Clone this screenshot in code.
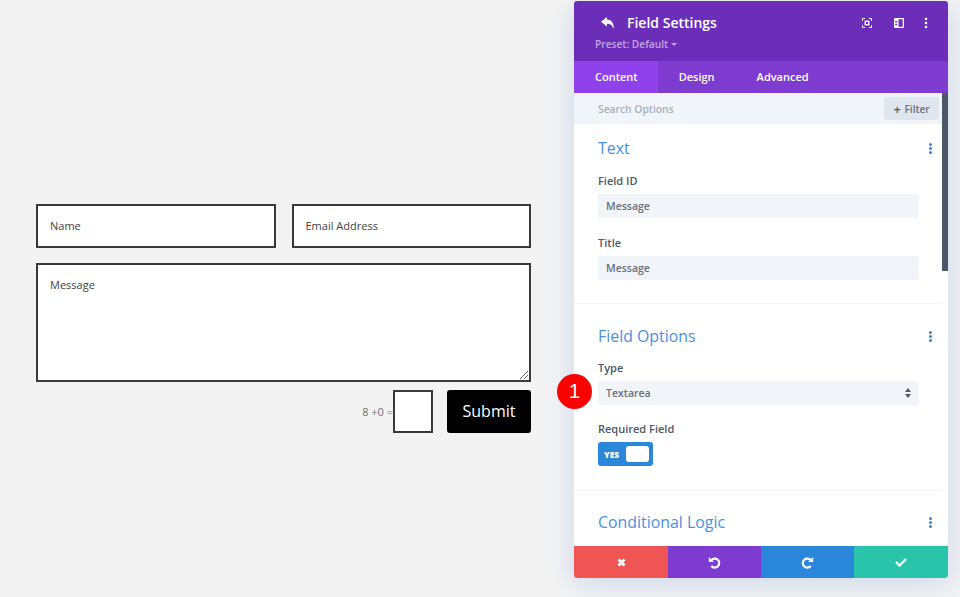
<div class="page">
	<form class="contact">
		<div class="row">
			<div class="input">Name</div>
			<div class="input">Email Address</div>
		</div>
		<div class="input area">
			Message
			<svg class="grip" width="10" height="10" viewBox="0 0 10 10">
				<path d="M1 9L9 1M5 9L9 5" stroke="#666" stroke-width="1" fill="none" />
			</svg>
		</div>
		<div class="actions">
			<span class="captcha">8 +0 =</span>
			<div class="answer"></div>
			<div class="submit">Submit</div>
		</div>
	</form>

	<div class="badge">1</div>

	<aside class="panel">
		<div class="scrollbar"></div>

		<header class="head">
			<div class="title-row">
				<svg class="back" width="14" height="12" viewBox="0 0 14 12">
					<path d="M6 0L0 4.800 6 9.600V6.800c3 0 5 1.200 6.600 5 .8-5-1.800-9-6.600-9.300z" fill="#fff" />
				</svg>
				<h1>Field Settings</h1>
				<svg class="hicon focus" width="10" height="10" viewBox="0 0 10 10">
					<path d="M.5 3V.5H3M7 .5h2.500V3M9.500 7v2.500H7M3 9.500H.5V7" stroke="#fff" stroke-width="1" fill="none" />
					<rect x="3.200" y="3.200" width="3.600" height="3.600" stroke="#fff" stroke-width="1.300" fill="none" />
				</svg>
				<svg class="hicon columns" width="10" height="10" viewBox="0 0 10 10">
					<path d="M1 0h8a1 1 0 0 1 1 1v8a1 1 0 0 1-1 1H1a1 1 0 0 1-1-1V1a1 1 0 0 1 1-1zm.2 3v1.500h2V3zm0 2.700v1.500h2V5.700zM4.500 1.300v7.400h4.200V1.300z" fill="#fff" fill-rule="evenodd" />
				</svg>
				<svg class="hicon more" width="4" height="12" viewBox="0 0 4 12">
					<circle cx="2" cy="2" r="1.300" fill="#fff" /><circle cx="2" cy="6" r="1.300" fill="#fff" /><circle cx="2" cy="10" r="1.300" fill="#fff" />
				</svg>
			</div>
			<div class="preset">Preset: Default <i class="caret"></i></div>
		</header>

		<nav class="tabs">
			<span class="tab active">Content</span>
			<span class="tab">Design</span>
			<span class="tab">Advanced</span>
		</nav>

		<div class="search">
			<span class="placeholder">Search Options</span>
			<span class="filter"><b>+</b> Filter</span>
		</div>

		<div class="body">
			<section class="group">
				<div class="group-head">
					<h2>Text</h2>
					<span class="dots"><i></i><i></i><i></i></span>
				</div>
				<div class="label">Field ID</div>
				<div class="field">Message</div>
				<div class="label">Title</div>
				<div class="field">Message</div>
			</section>

			<section class="group">
				<div class="group-head">
					<h2>Field Options</h2>
					<span class="dots"><i></i><i></i><i></i></span>
				</div>
				<div class="label">Type</div>
				<div class="field select">
					Textarea
					<svg width="6" height="10" viewBox="0 0 6 10">
						<path d="M3 0l3 4H0zM3 10L0 6h6z" fill="#4c5866" />
					</svg>
				</div>
				<div class="label required">Required Field</div>
				<div class="toggle"><span>YES</span><i></i></div>
			</section>

			<section class="group last">
				<div class="group-head">
					<h2>Conditional Logic</h2>
					<span class="dots"><i></i><i></i><i></i></span>
				</div>
			</section>
		</div>

		<footer class="foot">
			<div class="btn red">
				<svg width="11" height="11" viewBox="0 0 11 11">
					<path d="M1.500 3.500l2-2 2 2 2-2 2 2-2 2 2 2-2 2-2-2-2 2-2-2 2-2z" fill="#fff" />
				</svg>
			</div>
			<div class="btn purple">
				<svg width="13" height="13" viewBox="0 0 13 13">
					<path d="M3 4.500a4.500 4.500 0 1 1 .3 5.500" stroke="#fff" stroke-width="2.200" fill="none" />
					<path d="M.8 1v5h5z" fill="#fff" />
				</svg>
			</div>
			<div class="btn blue">
				<svg width="13" height="13" viewBox="0 0 13 13">
					<path d="M10 4.500a4.500 4.500 0 1 0-.3 5.500" stroke="#fff" stroke-width="2.200" fill="none" />
					<path d="M12.200 1v5h-5z" fill="#fff" />
				</svg>
			</div>
			<div class="btn green">
				<svg width="12" height="10" viewBox="0 0 12 10">
					<path d="M1 5l3.500 3.500L11 2" stroke="#fff" stroke-width="2.400" fill="none" />
				</svg>
			</div>
		</footer>
	</aside>
</div>

<style>
	:global(body) {
		margin: 0;
		background: #f3f3f3;
	}
	.page {
		position: relative;
		width: 960px;
		height: 597px;
		overflow: hidden;
		font-family: "Open Sans", sans-serif;
		padding: 204px 0 0 36px;
		box-sizing: border-box;
	}
	.contact {
		width: 495px;
		display: flex;
		flex-direction: column;
		gap: 15px;
	}
	.row {
		display: flex;
		gap: 16px;
	}
	.input {
		position: relative;
		flex: 1;
		height: 44px;
		box-sizing: border-box;
		background: #fff;
		border: 2px solid #3a3a3a;
		padding: 0 12px;
		font-size: 11px;
		line-height: 40px;
		color: #3f3f3f;
	}
	.area {
		flex: none;
		height: 119px;
		line-height: 39px;
	}
	.grip {
		position: absolute;
		right: 0;
		bottom: 0;
	}
	.actions {
		display: flex;
		align-items: flex-start;
		justify-content: flex-end;
		margin-top: -7px;
	}
	.captcha {
		font-size: 11px;
		line-height: 43px;
		color: #6e6e6e;
	}
	.answer {
		width: 40px;
		height: 43px;
		box-sizing: border-box;
		background: #fff;
		border: 2px solid #3a3a3a;
	}
	.submit {
		margin-left: 14px;
		width: 84px;
		height: 43px;
		background: #000;
		border-radius: 3px;
		color: #fff;
		font-size: 16px;
		line-height: 42px;
		text-align: center;
	}
	.badge {
		position: absolute;
		left: 557px;
		top: 374px;
		width: 35px;
		height: 35px;
		border-radius: 50%;
		background: #fe0000;
		color: #fff;
		font-family: "Liberation Sans", sans-serif;
		font-size: 20px;
		line-height: 35px;
		text-align: center;
		z-index: 2;
	}
	.panel {
		position: absolute;
		left: 574px;
		top: 1px;
		width: 374px;
		height: 577px;
		display: flex;
		flex-direction: column;
		background: #fff;
		border-radius: 3px;
		box-shadow: 0 5px 30px rgba(43, 105, 200, 0.2);
	}
	.scrollbar {
		position: absolute;
		top: 92px;
		right: 0;
		width: 6px;
		height: 178px;
		background: #4c5866;
		z-index: 1;
	}
	.head {
		height: 60px;
		box-sizing: border-box;
		background: #6c2eb9;
		border-radius: 3px 3px 0 0;
		padding: 12px 20px 0 27px;
		flex: none;
	}
	.title-row {
		display: flex;
		align-items: center;
		height: 19px;
	}
	h1 {
		margin: 0 0 0 12px;
		font-size: 14px;
		font-weight: 600;
		color: #fff;
		flex: 1;
		line-height: 19px;
	}
	.hicon {
		display: block;
	}
	.focus {
		margin-right: 22px;
	}
	.columns {
		margin-right: 20px;
	}
	.preset {
		margin: 5px 0 0 -6px;
		font-size: 10.200px;
		font-weight: 600;
		line-height: 14px;
		color: #c3a5e4;
	}
	.caret {
		display: inline-block;
		border: 3px solid transparent;
		border-top-color: #c3a5e4;
		border-bottom: 0;
		vertical-align: 2px;
	}
	.tabs {
		height: 32px;
		flex: none;
		display: flex;
		background: #7d3bcf;
	}
	.tab {
		font-size: 11px;
		font-weight: 600;
		color: #fff;
		line-height: 32px;
		padding: 0 21px;
	}
	.tab.active {
		background: #8f42ec;
		padding: 0 20px 0 21px;
	}
	.search {
		height: 31px;
		flex: none;
		box-sizing: border-box;
		background: #f1f5f9;
		display: flex;
		align-items: center;
		justify-content: space-between;
		padding: 0 9px 0 24px;
		font-size: 10px;
	}
	.placeholder {
		color: #a3b0c2;
		font-weight: 600;
		font-size: 10.300px;
	}
	.filter {
		width: 55px;
		height: 23px;
		background: #e0e5ee;
		border-radius: 3px;
		color: #66707e;
		font-weight: 600;
		line-height: 25px;
		text-align: center;
		box-sizing: border-box;
	}
	.filter b {
		font-size: 13px;
		color: #4c5866;
		font-weight: 600;
		margin-right: 1px;
		vertical-align: -1px;
	}
	.body {
		flex: 1;
		overflow: hidden;
	}
	.group {
		padding: 21px 23px 23px 24px;
		margin-right: 6px;
		border-bottom: 1px solid #f3f5f8;
	}
	.group:first-child {
		padding-top: 13px;
	}
	.group:nth-child(2) {
		padding-bottom: 24px;
	}
	.group.last {
		border: 0;
		padding-top: 20px;
	}
	.group-head {
		display: flex;
		justify-content: space-between;
		align-items: center;
		height: 22px;
		margin-right: -13px;
	}
	h2 {
		margin: 0;
		font-size: 15.900px;
		font-weight: 400;
		color: #4a90e2;
		line-height: 22px;
	}
	.dots {
		display: flex;
		flex-direction: column;
		gap: 1px;
	}
	.dots i {
		width: 3px;
		height: 3px;
		border-radius: 50%;
		background: #2b87da;
	}
	.label {
		margin-top: 17px;
		font-size: 11px;
		font-weight: 600;
		color: #4c5866;
		line-height: 15px;
	}
	.group-head + .label {
		margin-top: 14px;
	}
	.group:nth-child(2) .group-head + .label {
		margin-top: 13px;
	}
	.label.required {
		margin-top: 16px;
	}
	.field {
		margin-top: 6px;
		height: 24px;
		box-sizing: border-box;
		background: #f1f5f9;
		border-radius: 3px;
		padding: 0 8px;
		font-size: 10.500px;
		font-weight: 600;
		line-height: 25px;
		color: #66707e;
	}
	.select {
		display: flex;
		align-items: center;
		justify-content: space-between;
	}
	.toggle {
		margin-top: 6px;
		width: 55px;
		height: 24px;
		box-sizing: border-box;
		background: #2b87da;
		border-radius: 3px;
		display: flex;
		align-items: center;
		justify-content: space-between;
		padding: 0 4px 0 6px;
		color: #fff;
		font-size: 8.500px;
		font-weight: 800;
	}
	.toggle i {
		width: 23px;
		height: 16px;
		background: #fff;
		border-radius: 3px;
	}
	.foot {
		height: 32px;
		flex: none;
		display: flex;
		border-radius: 0 0 3px 3px;
		overflow: hidden;
	}
	.btn {
		flex: none;
		width: 93px;
		display: flex;
		align-items: center;
		justify-content: center;
	}
	.red { background: #ef5555; width: 94px; }
	.purple { background: #7d3bcf; }
	.blue { background: #2b87da; }
	.green { background: #29c4a9; width: 94px; }
</style>
